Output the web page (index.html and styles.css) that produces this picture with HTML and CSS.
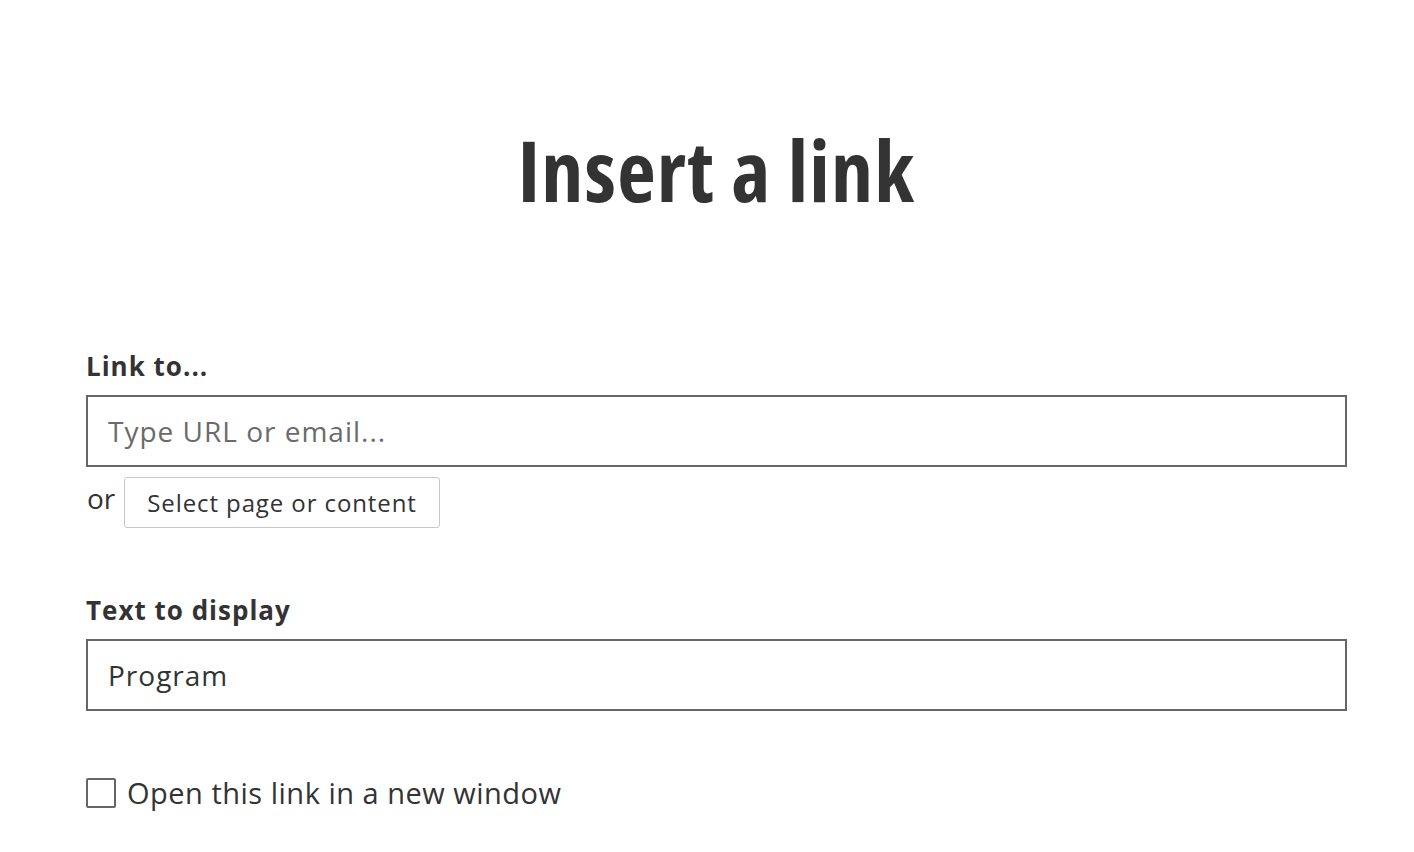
FILE: index.html
```html
<!DOCTYPE html>
<html lang="en">
<head>
<meta charset="utf-8">
<title>Insert a link</title>
<link rel="stylesheet" href="styles.css">
</head>
<body>
<main class="dialog">
  <h1 class="title">Insert a link</h1>
  <div class="field field-link">
    <label class="label" for="url">Link to...</label>
    <input class="text-input" id="url" type="text" placeholder="Type URL or email...">
    <div class="or-row">
      <span class="or">or</span>
      <button class="select-btn" type="button">Select page or content</button>
    </div>
  </div>
  <div class="field field-text">
    <label class="label" for="display">Text to display</label>
    <input class="text-input" id="display" type="text" value="Program">
  </div>
  <label class="check-row">
    <span class="checkbox"></span>
    <span class="check-label">Open this link in a new window</span>
  </label>
</main>
</body>
</html>
```
FILE: styles.css
```css
html, body {
  margin: 0;
  padding: 0;
  background: #fff;
}
body {
  font-family: "Open Sans", "Liberation Sans", sans-serif;
  color: #333;
}
.dialog {
  padding: 0 67px 0 86px;
}
.title {
  margin: 0;
  padding-top: 120px;
  font-family: "Open Sans", "Liberation Sans Narrow", sans-serif;
  font-stretch: 75%;
  font-weight: 700;
  font-size: 84px;
  line-height: 100px;
  text-align: center;
  color: #333;
  letter-spacing: 1.2px;
}
.field {
  display: flex;
  flex-direction: column;
}
.field-link {
  margin-top: 128px;
}
.field-text {
  margin-top: 64px;
}
.label {
  font-weight: 700;
  font-size: 26px;
  line-height: 36px;
  letter-spacing: 1px;
  margin-bottom: 11px;
}
.text-input {
  box-sizing: border-box;
  height: 72px;
  width: 100%;
  margin: 0;
  border: 2px solid #666;
  border-radius: 0;
  padding: 0 20px;
  font-family: "Open Sans", "Liberation Sans", sans-serif;
  font-size: 28px;
  letter-spacing: 1px;
  color: #333;
  background: #fff;
  outline: none;
}
.text-input::placeholder {
  color: #6b6b6b;
  opacity: 1;
}
.or-row {
  display: flex;
  align-items: flex-start;
  margin-top: 10px;
  gap: 9px;
}
.or {
  font-size: 28px;
  line-height: 36px;
  margin-top: 3px;
  padding-left: 1px;
}
.select-btn {
  box-sizing: border-box;
  height: 51px;
  margin: 0;
  padding: 0 22px;
  border: 1px solid #c8c8c8;
  border-radius: 3px;
  background: #fff;
  font-family: "Open Sans", "Liberation Sans", sans-serif;
  font-size: 24px;
  letter-spacing: 0.9px;
  color: #333;
}
.check-row {
  display: flex;
  align-items: center;
  gap: 11px;
  margin-top: 64px;
}
.checkbox {
  box-sizing: border-box;
  width: 30px;
  height: 30px;
  border: 2px solid #666;
  border-radius: 2px;
  background: #fff;
}
.check-label {
  font-size: 29px;
  line-height: 36px;
  letter-spacing: 0.5px;
}
```
